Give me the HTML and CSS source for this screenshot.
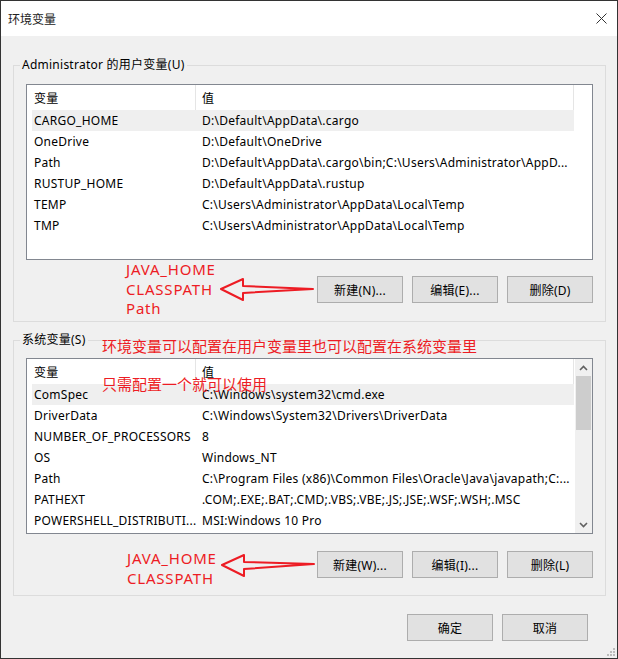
FILE: index.html
```html
<!DOCTYPE html>
<html lang="zh-CN">

<head>
    <meta charset="utf8">
    <title>环境变量</title>

    <link rel="stylesheet" href="styles.css">
</head>

<body>
    <div class="window">
        <div class="titlebar">
            <span class="title">环境变量</span>
            <svg class="close" width="11" height="11" viewBox="0 0 11 11">
                <path d="M0.5 0.5 L10.5 10.5 M10.5 0.5 L0.5 10.5" stroke="#333" stroke-width="1" fill="none" />
            </svg>
        </div>

        <div class="content">
            <fieldset class="group user">
                <legend>Administrator 的用户变量(U)</legend>
                <div class="list">
                    <div class="rows">
                        <div class="row head"><span>变量</span><span>值</span></div>
                        <div class="row selected"><span>CARGO_HOME</span><span>D:\Default\AppData\.cargo</span></div>
                        <div class="row"><span>OneDrive</span><span>D:\Default\OneDrive</span></div>
                        <div class="row"><span>Path</span><span>D:\Default\AppData\.cargo\bin;C:\Users\Administrator\AppD...</span></div>
                        <div class="row"><span>RUSTUP_HOME</span><span>D:\Default\AppData\.rustup</span></div>
                        <div class="row"><span>TEMP</span><span>C:\Users\Administrator\AppData\Local\Temp</span></div>
                        <div class="row"><span>TMP</span><span>C:\Users\Administrator\AppData\Local\Temp</span></div>
                    </div>
                </div>
                <div class="actions">
                    <button>新建(N)...</button>
                    <button>编辑(E)...</button>
                    <button>删除(D)</button>
                </div>
            </fieldset>

            <fieldset class="group system">
                <legend>系统变量(S)</legend>
                <div class="list">
                    <div class="rows">
                        <div class="row head"><span>变量</span><span>值</span></div>
                        <div class="row selected"><span>ComSpec</span><span>C:\Windows\system32\cmd.exe</span></div>
                        <div class="row"><span>DriverData</span><span>C:\Windows\System32\Drivers\DriverData</span></div>
                        <div class="row"><span>NUMBER_OF_PROCESSORS</span><span>8</span></div>
                        <div class="row"><span>OS</span><span>Windows_NT</span></div>
                        <div class="row"><span>Path</span><span>C:\Program Files (x86)\Common Files\Oracle\Java\javapath;C:...</span></div>
                        <div class="row"><span>PATHEXT</span><span>.COM;.EXE;.BAT;.CMD;.VBS;.VBE;.JS;.JSE;.WSF;.WSH;.MSC</span></div>
                        <div class="row"><span>POWERSHELL_DISTRIBUTI...</span><span>MSI:Windows 10 Pro</span></div>
                    </div>
                    <div class="scrollbar">
                        <svg class="arrow" width="17" height="17" viewBox="0 0 17 17">
                            <polyline points="5,11 8.5,7.5 12,11" stroke="#606060" stroke-width="1.6" fill="none" />
                        </svg>
                        <div class="thumb"></div>
                        <div class="track"></div>
                        <svg class="arrow" width="17" height="17" viewBox="0 0 17 17">
                            <polyline points="5,7 8.5,10.5 12,7" stroke="#606060" stroke-width="1.6" fill="none" />
                        </svg>
                    </div>
                </div>
                <div class="actions">
                    <button>新建(W)...</button>
                    <button>编辑(I)...</button>
                    <button>删除(L)</button>
                </div>
            </fieldset>

            <div class="dialog-actions">
                <button>确定</button>
                <button>取消</button>
            </div>
        </div>

        <!-- red notes drawn over the screenshot -->
        <div class="note latin note-user">JAVA_HOME<br>CLASSPATH<br>Path</div>
        <svg class="note-arrow arrow-user" width="100" height="30" viewBox="0 0 100 30">
            <polygon points="94,13 24,10 24,3 2,13 24,24 24,17" stroke="#ed1c24" stroke-width="2" fill="none" stroke-linejoin="round" />
        </svg>
        <div class="note note-where">环境变量可以配置在用户变量里也可以配置在系统变量里</div>
        <div class="note note-once">只需配置一个就可以使用</div>
        <div class="note latin note-system">JAVA_HOME<br>CLASSPATH</div>
        <svg class="note-arrow arrow-system" width="100" height="30" viewBox="0 0 100 30">
            <polygon points="94,12 24,10 24,3 2,13 24,24 24,17" stroke="#ed1c24" stroke-width="2" fill="none" stroke-linejoin="round" />
        </svg>

        <svg class="grip" width="10" height="10" viewBox="0 0 10 10">
            <rect x="7" y="1" width="2" height="2" fill="#bcbcbc" />
            <rect x="4" y="4" width="2" height="2" fill="#bcbcbc" />
            <rect x="7" y="4" width="2" height="2" fill="#bcbcbc" />
            <rect x="1" y="7" width="2" height="2" fill="#bcbcbc" />
            <rect x="4" y="7" width="2" height="2" fill="#bcbcbc" />
            <rect x="7" y="7" width="2" height="2" fill="#bcbcbc" />
        </svg>
    </div>
</body>

</html>
```

FILE: styles.css
```css
* {
    box-sizing: border-box;
}

body {
    margin: 0;
    font-family: "Noto Sans", "Noto Sans CJK SC", sans-serif;
    font-size: 12px;
    letter-spacing: 0.25px;
    color: #000;
}

.window {
    position: relative;
    width: 618px;
    height: 659px;
    border: 1px solid #333;
    background-color: #f0f0f0;
    display: flex;
    flex-direction: column;
}

.titlebar {
    height: 35px;
    background-color: white;
    display: flex;
    align-items: center;
    justify-content: space-between;
    padding-left: 7px;
    padding-right: 10px;
}

.titlebar .title {
    font-family: "Noto Sans CJK SC", sans-serif;
    letter-spacing: 0;
    color: #222;
}

.content {
    padding: 0 11px 0 12px;
}

fieldset.group {
    margin: 0;
    border: 1px solid #dcdcdc;
    padding: 11px 12px 18px 12px;
}

fieldset.group legend {
    padding: 0 2px;
    margin-left: -6px;
    line-height: 16px;
}

fieldset.user {
    margin-top: 21px;
}

fieldset.system {
    margin-top: 10px;
    padding-top: 10px;
    padding-bottom: 17px;
}

.list {
    height: 176px;
    border: 1px solid #828790;
    background-color: white;
    display: flex;
}

.list .rows {
    width: 542px;
    margin-left: 5px;
    display: flex;
    flex-direction: column;
}

.row {
    display: grid;
    grid-template-columns: 164px 1fr;
    height: 21px;
    align-items: center;
    white-space: nowrap;
}

.row span {
    overflow: hidden;
}

.row span:first-child {
    padding-left: 2px;
}

.row span:last-child {
    padding-left: 6px;
}

.row.head {
    height: 25px;
    align-items: stretch;
}

.row.head span {
    display: flex;
    align-items: center;
    border-right: 1px solid #e5e5e5;
}

.row.selected {
    background-color: #efefef;
}

.scrollbar {
    margin-left: auto;
    width: 17px;
    background-color: #f0f0f0;
    display: flex;
    flex-direction: column;
}

.scrollbar .thumb {
    height: 54px;
    margin: 0 1px;
    background-color: #cdcdcd;
}

.scrollbar .track {
    flex-grow: 1;
}

.actions {
    display: flex;
    justify-content: flex-end;
    gap: 9px;
    margin-top: 16px;
}

fieldset.system .actions {
    margin-top: 17px;
}

button {
    width: 86px;
    height: 27px;
    padding: 0;
    border: 1px solid #adadad;
    background-color: #e1e1e1;
    font-family: "Noto Sans", "Noto Sans CJK SC", sans-serif;
    font-size: 12px;
    letter-spacing: 0.25px;
    color: #000;
}

.dialog-actions {
    display: flex;
    justify-content: flex-end;
    gap: 9px;
    margin-top: 18px;
    margin-right: 18px;
}

.note {
    position: absolute;
    font-family: "Noto Sans", "Noto Sans CJK SC", sans-serif;
    font-size: 15px;
    line-height: 19.5px;
    letter-spacing: 0;
    color: #ed1c24;
    white-space: nowrap;
}

.note.latin {
    letter-spacing: 0.8px;
}

.note-user {
    left: 125px;
    top: 259px;
}

.note-where {
    left: 101px;
    top: 336px;
}

.note-once {
    left: 101px;
    top: 374px;
}

.note-system {
    left: 126px;
    top: 548px;
}

.note-arrow {
    position: absolute;
}

.arrow-user {
    left: 218px;
    top: 275px;
}

.arrow-system {
    left: 219px;
    top: 551px;
}

.grip {
    position: absolute;
    right: 1px;
    bottom: 1px;
}
```
